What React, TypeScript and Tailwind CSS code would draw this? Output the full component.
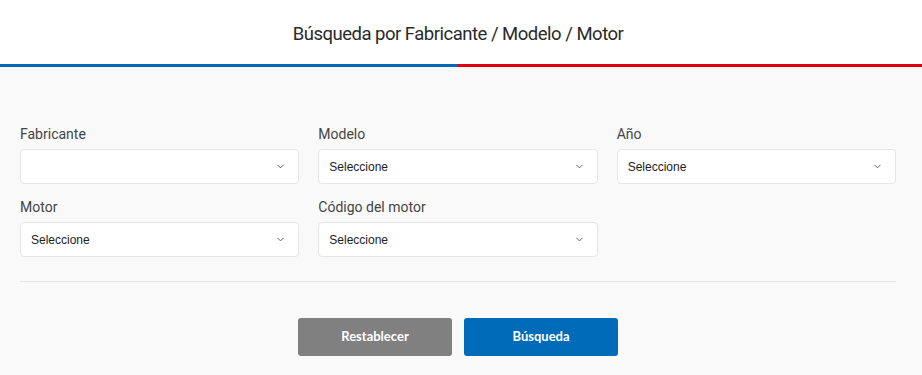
import { ChevronDown } from 'lucide-react';

const fields = [
  { label: 'Fabricante', value: '' },
  { label: 'Modelo', value: 'Seleccione' },
  { label: 'Año', value: 'Seleccione' },
  { label: 'Motor', value: 'Seleccione' },
  { label: 'Código del motor', value: 'Seleccione' },
];

function SelectBox({ label, value }: { label: string; value: string }) {
  return (
    <div className="flex flex-col">
      <label className="text-[14px] leading-[20px] text-[#444] mb-[5px] font-['Roboto',sans-serif]">{label}</label>
      <div className="h-[35px] bg-white border border-[#e6e6e6] rounded-[4px] flex items-center justify-between pl-[10px] pr-[12px]">
        <span className="text-[12px] text-[#222] font-['Liberation_Sans',Arial,sans-serif]">{value}</span>
        <ChevronDown className="w-[11px] h-[11px] text-[#555]" strokeWidth={2} />
      </div>
    </div>
  );
}

export default function App() {
  return (
    <div className="w-[922px] h-[375px] bg-[#f9f9f9] flex flex-col">
      {/* Header */}
      <div className="bg-white h-[64px] flex items-center justify-center">
        <h2 className="text-[18.5px] text-[#2a2a2a] font-['Roboto',sans-serif] tracking-[-0.5px] mt-[6px] ml-[-6px]">
          Búsqueda por Fabricante / Modelo / Motor
        </h2>
      </div>
      <div className="flex h-[3px]">
        <div className="w-[458px] bg-[#0068b8]" />
        <div className="flex-1 bg-[#e0000e]" />
      </div>

      {/* Form */}
      <div className="pl-[20px] pr-[26px] pt-[57px]">
        <div className="grid grid-cols-3 gap-x-[19px] gap-y-[13px]">
          {fields.map((f) => (
            <SelectBox key={f.label} label={f.label} value={f.value} />
          ))}
        </div>
        <div className="mt-[24px] border-t border-[#e6e6e6]" />
        <div className="flex justify-center gap-[12px] mt-[36px]">
          <button className="w-[154px] h-[38px] rounded-[3px] bg-[#808080] text-white text-[13px] font-bold font-['Lato',sans-serif]">
            Restablecer
          </button>
          <button className="w-[154px] h-[38px] rounded-[3px] bg-[#006bb8] text-white text-[13px] font-bold font-['Lato',sans-serif]">
            Búsqueda
          </button>
        </div>
      </div>
    </div>
  );
}
